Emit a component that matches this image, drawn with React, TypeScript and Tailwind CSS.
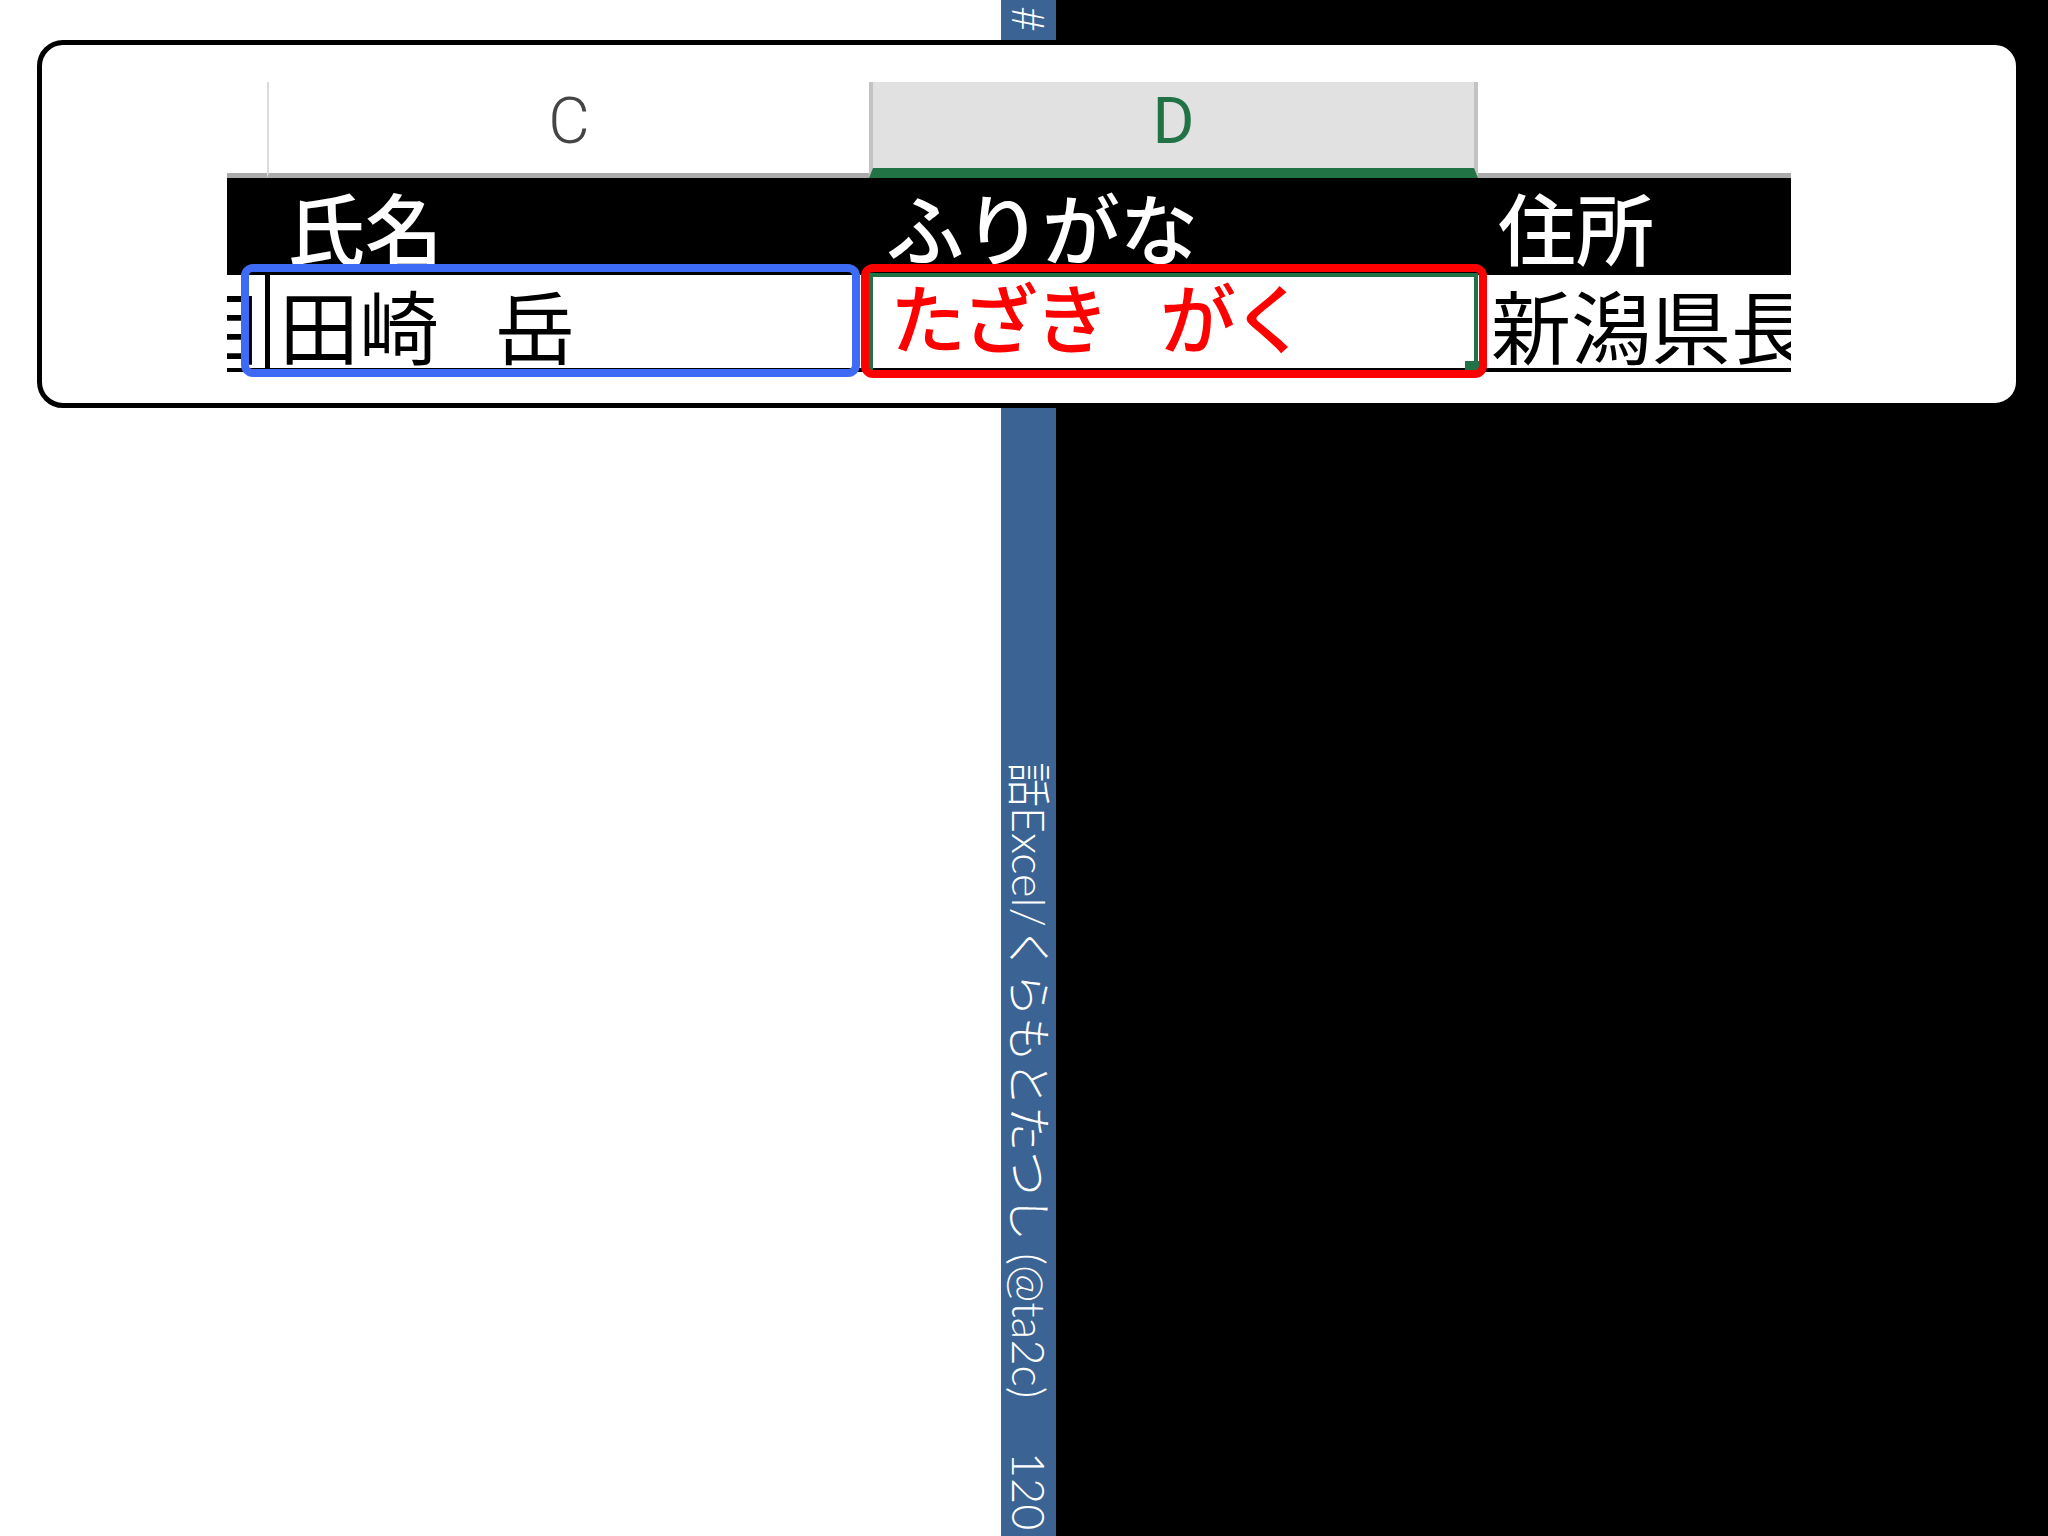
export default function App() {
  const jp = { fontFamily: '"Noto Sans CJK JP", "Noto Sans", sans-serif' };
  const strip = { fontFamily: 'Lato, "Noto Sans CJK JP", sans-serif' };
  const latin = { fontFamily: 'Roboto, "Liberation Sans", sans-serif' };
  return (
    <div className="relative w-[2048px] h-[1536px] flex overflow-hidden">
      <div className="w-[1001px] shrink-0 bg-white" />
      <div className="w-[55px] shrink-0 bg-[#3b6393] flex flex-col items-center overflow-hidden text-white font-light text-[45px] leading-none" style={strip}>
        <div className="h-[762px] shrink-0 flex flex-col items-center pt-[6px]">
          <div className="[writing-mode:vertical-rl] [text-orientation:sideways]">#</div>
        </div>
        <div className="shrink-0 [writing-mode:vertical-rl] [text-orientation:sideways] whitespace-nowrap">話Excel/くらもとたつし (@ta2c)</div>
        <div className="shrink-0 [writing-mode:vertical-rl] [text-orientation:sideways] whitespace-nowrap mt-[54px]">120</div>
      </div>
      <div className="flex-1 bg-black" />

      <div className="absolute left-[37px] top-[40px] w-[1984px] h-[368px] border-[5px] border-black rounded-[26px] bg-white">
        <div className="relative ml-[185px] mt-[37px] w-[1564px]">
          {/* column headers */}
          <div className="flex h-[96px]">
            <div className="w-[40px] border-b-[5px] border-[#ababab]" />
            <div className="w-[602px] border-l-2 border-l-[#dadada] border-b-[5px] border-b-[#ababab] flex justify-center pt-[8px] text-[64px] leading-none text-[#454545] font-light" style={latin}>C</div>
            <div className="w-[609px] bg-[#e1e1e1] border-l-4 border-r-4 border-[#c3c3c3] border-b-[10px] border-b-[#217346] flex justify-center pt-[8px] text-[64px] leading-none text-[#217346]" style={latin}>D</div>
            <div className="flex-1 border-b-[5px] border-[#ababab]" />
          </div>
          {/* header row (black) */}
          <div className="flex h-[97px] bg-black text-white text-[78px] leading-none font-medium" style={jp}>
            <div className="w-[40px]" />
            <div className="w-[602px] pl-[20px] pt-[9px]">氏名</div>
            <div className="w-[609px] pl-[17px] pt-[9px]">ふりがな</div>
            <div className="flex-1 pl-[20px] pt-[9px] whitespace-nowrap">住所</div>
          </div>
          {/* data row */}
          <div className="flex h-[97px] border-b-4 border-black text-[80px] leading-none font-normal text-black" style={jp}>
            <div className="w-[43px] border-r-[5px] border-black overflow-hidden flex justify-end pt-[8px]">
              <span className="shrink-0">目</span>
            </div>
            <div className="w-[599px] pl-[9px] pt-[8px] whitespace-nowrap">
              田崎<span className="inline-block w-[56px] overflow-hidden align-top">　</span>岳
            </div>
            <div className="w-[609px] pl-[21px] pt-[2px] text-[#ff0000] font-medium text-[76px] tracking-[-4px] whitespace-nowrap">
              たざき<span className="inline-block w-[54px] overflow-hidden align-top">　</span>がく
            </div>
            <div className="flex-1 pl-[13px] pt-[8px] overflow-hidden whitespace-nowrap">新潟県長野</div>
          </div>

          {/* selected cell border */}
          <div className="absolute left-[642px] top-[191px] w-[609px] h-[101px] border-4 border-[#217346]">
            <div className="absolute right-[-6px] bottom-[-6px] w-[15px] h-[15px] bg-[#217346]" />
          </div>
          {/* annotation boxes */}
          <div className="absolute left-[14px] top-[182px] w-[619px] h-[113px] border-[8px] border-[#3d6bf5] rounded-[12px]" />
          <div className="absolute left-[634px] top-[182px] w-[626px] h-[114px] border-[8px] border-[#ff0000] rounded-[12px]" />
        </div>
      </div>
    </div>
  );
}
